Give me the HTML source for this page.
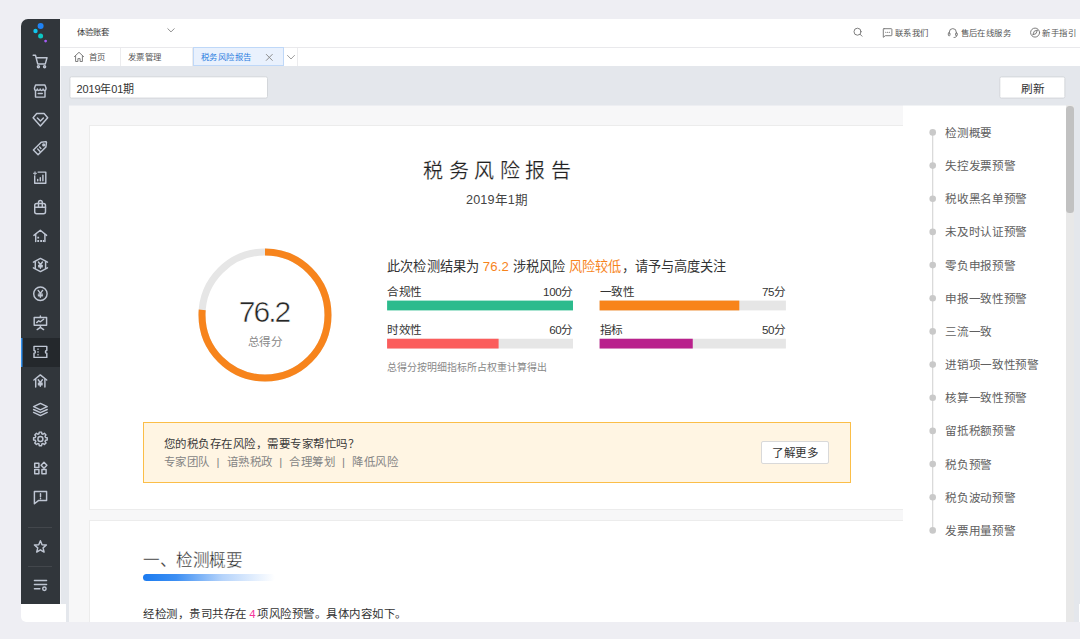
<!DOCTYPE html>
<html lang="zh-CN">
<head>
<meta charset="utf-8">
<title>税务风险报告</title>
<style>
*{box-sizing:border-box;margin:0;padding:0}
html,body{width:1080px;height:639px;overflow:hidden;background:#eeeef3}
body{font-family:"Liberation Sans",sans-serif;color:#333;position:relative;-webkit-font-smoothing:antialiased}
.abs{position:absolute}
#app{position:absolute;left:21px;top:19px;width:1059px;height:603px;background:#e4e7ec;border-radius:7px 0 0 5px;overflow:hidden}
#pg{position:absolute;left:-21px;top:-19px;width:1080px;height:639px}
#side{left:21px;top:19px;width:39px;height:585.3px;background:#31363b}
#sidebot{left:21px;top:604.3px;width:45.1px;height:17.7px;background:#fff}
#hdr{left:60px;top:19px;width:1020px;height:29px;background:#fff;border-bottom:1px solid #e9e9ec}
#tabs{left:60px;top:48px;width:1020px;height:18px;background:#fff}
.t8{font-size:8.4px;line-height:12px;letter-spacing:.42px;white-space:nowrap;color:#555}
.tab{top:48px;height:18px;border-right:1px solid #ececee}
#content{left:69.2px;top:106px;width:996.5px;height:517px;background:#f7f7f8}
.card{background:#fff;border:1px solid #ececec}
.ico{position:absolute;fill:none;stroke:#bfc6d3;stroke-width:1.45;stroke-linecap:round;stroke-linejoin:round}
.hi{position:absolute;fill:none;stroke:#777;stroke-width:.95;stroke-linecap:round;stroke-linejoin:round}
.lbl{font-size:11.6px;line-height:14px;letter-spacing:-.35px;color:#333;white-space:nowrap}
.nav{left:945.4px;font-size:11.6px;line-height:14px;letter-spacing:-.35px;color:#606060;white-space:nowrap}
.sp{margin:0 6.7px}
</style>
</head>
<body>
<div id="app"><div id="pg">

<!-- SIDEBAR -->
<div id="side" class="abs"></div>
<div id="sidebot" class="abs"></div>
<div class="abs" style="left:21px;top:337.600px;width:39px;height:29.200px;background:#24282c"></div>
<div class="abs" style="left:21px;top:337.600px;width:1px;height:29.200px;background:#3391ee"></div><div class="abs" style="left:22px;top:337.600px;width:1px;height:29.200px;background:#2a5c8d"></div>
<svg class="ico" style="left:21px;top:19px;width:39px;height:586px" viewBox="21 19 39 586">
<g transform="translate(32.4 53.7)"><path d="M0.8 1.6h2.3l2.2 8.6h7.6l1.7-6.2H4"/><circle cx="6" cy="13" r="1" /><circle cx="12.2" cy="13" r="1"/></g>
<g transform="translate(32.4 83.0)"><path d="M3.200 1.900h9.300l1.100 3v1.100c0 .8-.6 1.400-1.440 1.400s-1.440-.6-1.440-1.400c0 .8-.6 1.400-1.440 1.400S7.850 6.800 7.850 6c0 .8-.6 1.400-1.440 1.400S4.970 6.800 4.970 6c0 .8-.6 1.400-1.440 1.400S2.100 6.800 2.100 6V4.900z"/><path d="M3.100 7.400v6.700h9.500V7.400"/><path d="M5.800 10.500h4.100"/></g>
<g transform="translate(32.4 111.7)"><path d="M4.3 1.800h7.400L15.300 6 8 14.300 0.700 6z"/><path d="M5 6.200L8 9.200l3-3"/></g>
<g transform="translate(32.4 140.7)"><path d="M1 9.300L8.800 1.500l4.700-.6.600 .6-.600 4.700-7.800 7.800z" /><circle cx="11.300" cy="4.200" r="0.900"/><path d="M5.300 8.300l2.400 2.400M7.200 6.400l1.300 1.300"/></g>
<g transform="translate(32.4 169.6)"><path d="M5.700 2.500H13.400V13.600H2.300V6.300"/><path d="M5.300 11.200V9.900M7.900 11.200V8.200M10.500 11.200V5.600"/><path d="M2.600 2.100v3M1.100 3.600h3" stroke-width="1.100"/></g>
<g transform="translate(32.4 198.9)"><rect x="2.300" y="4.600" width="10.800" height="10.200" rx="2"/><path d="M6.100 8.300V3.500a1.900 1.900 0 0 1 3.800 0V8.300"/><path d="M2.300 8.300h10.800"/></g>
<g transform="translate(32.4 228.0)"><path d="M1.500 7.400L7.900 2.300l6.300 5.100"/><path d="M3.300 6.400v7.200M12.500 6.400v7.200"/><path d="M4.900 9.600h1.800M4.900 13h1.800M7.800 13h1.800M10.400 13h1.300" stroke-width="1.900" stroke-linecap="butt"/></g>
<g transform="translate(32.4 256.6)"><path d="M1 5.600L8.050 1.800l7.050 3.800M1 11.200L8.050 15l7.050-3.800M2.900 4.900v7M13.200 4.900v7"/><path d="M6.05 5.40L8.05 8.10L10.05 5.40 M8.05 8.10V11.60 M6.25 8.80h3.60 M6.25 10.20h3.60"/></g>
<g transform="translate(32.4 285.7)"><circle cx="8" cy="8" r="6.700"/><path d="M5.80 4.70L8.00 7.67L10.20 4.70 M8.00 7.67V11.52 M6.02 8.44h3.96 M6.02 9.98h3.96"/></g>
<g transform="translate(32.4 314.8)"><path d="M1.800 2.800h12.400v7.700H1.800zM8 1.200v1.600M8 10.500v2M4.800 14.800L8 12.500l3.200 2.300"/><path d="M4.300 7.800l2-1.800 1.700 1 3.200-2.500"/></g>
<g transform="translate(32.4 343.9)"><path d="M1.600 2.500h12.800v4.100a1.400 1.400 0 0 0 0 2.800v4.100H1.600v-4.100a1.400 1.400 0 0 0 0-2.800z"/><path d="M5.600 5v.6M5.600 7.700v.6M5.600 10.400v.6" stroke-width="1.250"/></g>
<g transform="translate(32.4 372.9)"><path d="M1.500 7.100L7.900 2l6.400 5.100"/><path d="M3.300 6.300v7.900M12.500 6.300v7.900"/><path d="M5.80 6.85L7.90 9.69L10.00 6.85 M7.90 9.69V13.36 M6.01 10.42h3.78 M6.01 11.89h3.78"/></g>
<g transform="translate(32.4 401.9)"><path d="M8 1.500l6.800 3.200L8 7.900 1.200 4.700z"/><path d="M1.200 7.600L8 10.800l6.800-3.200M1.200 10.500L8 13.700l6.800-3.200"/></g>
<g transform="translate(32.4 430.9)"><path d="M6.83 1.20 L9.17 1.20 L9.41 2.89 L10.61 3.39 L11.98 2.37 L13.63 4.02 L12.61 5.39 L13.11 6.59 L14.80 6.83 L14.80 9.17 L13.11 9.41 L12.61 10.61 L13.63 11.98 L11.98 13.63 L10.61 12.61 L9.41 13.11 L9.17 14.80 L6.83 14.80 L6.59 13.11 L5.39 12.61 L4.02 13.63 L2.37 11.98 L3.39 10.61 L2.89 9.41 L1.20 9.17 L1.20 6.83 L2.89 6.59 L3.39 5.39 L2.37 4.02 L4.02 2.37 L5.39 3.39 L6.59 2.89z" stroke-linejoin="round"/><circle cx="8" cy="8" r="2.500"/></g>
<g transform="translate(32.4 460.3)"><rect x="2.300" y="2.900" width="4.200" height="4.200"/><rect x="2.300" y="9.300" width="4.200" height="4.200"/><rect x="9.500" y="9.300" width="4.200" height="4.200"/><path d="M11.600 2l2.900 3-2.900 3-2.900-3z"/></g>
<g transform="translate(32.4 489.3)"><path d="M2 2.300h12.200v9H6l-4 3.200z"/><path d="M8.100 4.500v3M8.100 9.200v0.300"/></g>
<g transform="translate(32.4 538.5)"><path d="M8.00 2.20 L9.65 6.23 L13.99 6.55 L10.66 9.37 L11.70 13.60 L8.00 11.30 L4.30 13.60 L5.34 9.37 L2.01 6.55 L6.35 6.23z"/></g>
<g transform="translate(32.4 577.2)"><path d="M2 3.300h12.200M2 7.300h12.200M2 11.500h5.500" stroke-width="1.400"/><circle cx="12" cy="11.500" r="1.700"/></g>
</svg>
<div class="abs" style="left:28px;top:526.800px;width:24px;height:1px;background:#43474c"></div>
<div class="abs" style="left:28px;top:565.800px;width:24px;height:1px;background:#43474c"></div>
<svg class="abs" style="left:21px;top:19px;width:39px;height:28px" viewBox="0 0 39 28"><circle cx="19.600" cy="7.100" r="3" fill="#1f83f5"/><circle cx="14.500" cy="12" r="2.200" fill="#12c4ec"/><circle cx="19.600" cy="17.100" r="2.500" fill="#0cc7c3"/><circle cx="24.600" cy="22.100" r="1.400" fill="#a55cf5"/></svg>


<div class="abs" style="left:60px;top:66px;width:1px;height:538.3px;background:#f4f5f8"></div>
<!-- HEADER -->
<div id="hdr" class="abs"></div>
<div class="abs t8" style="left:76.5px;top:25.7px;color:#333;letter-spacing:.15px">体验账套</div>

<div class="abs t8" style="left:895px;top:26.800px">联系我们</div>
<div class="abs t8" style="left:960.500px;top:26.800px">售后在线服务</div>
<div class="abs t8" style="left:1042.300px;top:26.800px">新手指引</div>


<!-- TABS -->
<div id="tabs" class="abs"></div>
<div class="abs tab" style="left:60px;width:61px"></div>
<div class="abs tab" style="left:121px;width:72.2px"></div>
<div class="abs tab" style="left:193.2px;width:90.4px;top:47px;height:19px;background:#e9f1fd;border:1px solid #bfd8f8"></div>
<div class="abs tab" style="left:283.5px;width:14.8px"></div>
<div class="abs t8" style="left:89px;top:50.8px">首页</div>
<div class="abs t8" style="left:127.8px;top:50.8px">发票管理</div>
<div class="abs t8" style="left:201px;top:50.8px;color:#2b7de0">税务风险报告</div>



<svg class="hi" style="left:60px;top:19px;width:1020px;height:47px" viewBox="60 19 1020 47">
<g transform="translate(167 27.5)"><path d="M0.8 1.2L4 4.4L7.2 1.2" stroke="#888"/></g>
<g transform="translate(852 26)"><circle cx="5.500" cy="5.700" r="3.500"/><path d="M8.100 8.300l1.900 1.900"/></g>
<g transform="translate(882 27)"><path d="M2 1.700h7.200a.7.700 0 0 1 .7.700v5.600a.7.700 0 0 1-.7.700H3.300L1.300 10.300V2.400a.7.700 0 0 1 .7-.7z"/><path d="M3.700 5.300h.2M5.500 5.300h.2M7.300 5.300h.2" stroke-width="1.100"/></g>
<g transform="translate(947 27)"><path d="M2.300 6.200V5.300a3.500 3.700 0 0 1 7 0v.9"/><rect x="1.300" y="5.800" width="1.700" height="3" rx=".8"/><rect x="8.600" y="5.800" width="1.700" height="3" rx=".8"/><path d="M9.600 8.800c0 1.200-1 1.700-2.600 1.700"/></g>
<g transform="translate(1029 26.600)"><circle cx="6.100" cy="6" r="4.500"/><path d="M8.300 3.800L7 7l-3.200 1.200L5.100 5z"/></g>
<g transform="translate(73 51)"><path d="M1.400 5.600L6 1.300l4.600 4.300"/><path d="M2.600 5v5.500h2.300V7.600h2.200v2.900h2.300V5"/></g>
<g transform="translate(265.300 53.400)"><path d="M1 1l6 6M7 1L1 7" stroke="#888"/></g>
<g transform="translate(286.500 54)"><path d="M1 1.400l3.500 3.600L8 1.400" stroke="#999"/></g>
</svg>
<!-- TOOLBAR -->
<svg class="abs" style="left:60px;top:70px;width:1020px;height:34px" viewBox="60 70 1020 34"><rect x="69.9" y="76.8" width="197.6" height="21.3" rx="1.6" fill="#fff" stroke="#d3d6da"/><rect x="999.8" y="76.9" width="65.1" height="21.2" rx="1.6" fill="#fff" stroke="#d3d6da"/></svg>
<div class="abs" style="left:76.6px;top:81.7px;font-size:11px;line-height:14px;letter-spacing:-.15px;color:#333;white-space:nowrap">2019年01期</div>
<div class="abs" style="left:999.5px;top:81.8px;width:66px;text-align:center;font-size:11.7px;line-height:14px;letter-spacing:-.2px;padding-left:.2px;color:#333">刷新</div>

<!-- CONTENT -->
<div class="abs" style="left:69px;top:105px;width:997px;height:1px;background:#edeef2"></div>
<div id="content" class="abs"></div>
<div class="abs card" style="left:89px;top:125px;width:830px;height:385px"></div>
<div class="abs card" style="left:89px;top:520px;width:830px;height:120px"></div>


<!-- REPORT CARD 1 -->
<div class="abs" style="left:89.6px;top:158.5px;width:815px;text-align:center;font-size:20px;line-height:24px;letter-spacing:5.6px;padding-left:5.6px;color:#222;-webkit-text-stroke:.2px #fff;white-space:nowrap">税务风险报告</div>
<div class="abs" style="left:89.6px;top:191.8px;width:815px;text-align:center;font-size:12.6px;line-height:16px;letter-spacing:.15px;color:#444;white-space:nowrap">2019年1期</div>

<svg class="abs" style="left:195px;top:245px;width:140px;height:140px" viewBox="0 0 140 140">
  <circle cx="70" cy="70" r="63" fill="none" stroke="#e6e6e6" stroke-width="7"/>
  <circle cx="70" cy="70" r="63" fill="none" stroke="#f7841c" stroke-width="7" stroke-dasharray="301.63 395.84" transform="rotate(-90 70 70)"/>
</svg>
<div class="abs" style="left:195px;top:294px;width:140px;text-align:center;font-size:30px;line-height:36px;letter-spacing:-2px;padding-right:2px;color:#262626;-webkit-text-stroke:.55px #fff">76.2</div>
<div class="abs" style="left:195px;top:334.7px;width:140px;text-align:center;font-size:11.6px;line-height:14px;letter-spacing:-.35px;color:#888">总得分</div>

<div class="abs" style="left:387.2px;top:258.8px;font-size:13.2px;line-height:16px;letter-spacing:.12px;color:#333;white-space:nowrap">此次检测结果为 <span style="color:#f7841c">76.2</span> 涉税风险 <span style="color:#f7841c">风险较低</span>，请予与高度关注</div>

<div class="abs lbl" style="left:387.2px;top:284.6px">合规性</div>
<div class="abs lbl" style="left:387.2px;top:284.6px;width:185.8px;text-align:right">100分</div>

<div class="abs lbl" style="left:599.6px;top:284.6px">一致性</div>
<div class="abs lbl" style="left:599.6px;top:284.6px;width:186.2px;text-align:right">75分</div>

<div class="abs lbl" style="left:387.2px;top:322.8px">时效性</div>
<div class="abs lbl" style="left:387.2px;top:322.8px;width:185.8px;text-align:right">60分</div>

<div class="abs lbl" style="left:599.6px;top:322.8px">指标</div>
<div class="abs lbl" style="left:599.6px;top:322.8px;width:186.2px;text-align:right">50分</div>

<div class="abs" style="left:387.2px;top:361.8px;font-size:9.95px;line-height:12px;color:#888;white-space:nowrap">总得分按明细指标所占权重计算得出</div>

<svg class="abs" style="left:380px;top:295px;width:420px;height:60px" viewBox="380 295 420 60" shape-rendering="geometricPrecision">
<rect x="387.1" y="300.6" width="185.9" height="9.8" fill="#2cbb8d"/>
<rect x="599.6" y="300.6" width="186.3" height="9.8" fill="#e6e6e6"/><rect x="599.6" y="300.6" width="139.7" height="9.8" fill="#f8841a"/>
<rect x="387.1" y="338.75" width="185.9" height="9.75" fill="#e6e6e6"/><rect x="387.1" y="338.75" width="111.5" height="9.75" fill="#fb5d5c"/>
<rect x="599.6" y="338.75" width="186.3" height="9.75" fill="#e6e6e6"/><rect x="599.6" y="338.75" width="93.15" height="9.75" fill="#b9218c"/>
</svg>
<!-- BANNER -->
<div class="abs" style="left:143.1px;top:422.2px;width:708.2px;height:60.6px;background:#fff5e3;border:1px solid #fbbe48"></div>
<div class="abs" style="left:164px;top:437.3px;font-size:11.45px;line-height:14px;letter-spacing:.47px;color:#3a3a3a;white-space:nowrap">您的税负存在风险，需要专家帮忙吗？</div>
<div class="abs" style="left:164px;top:454.5px;font-size:11.45px;line-height:14px;letter-spacing:.47px;color:#848484;white-space:nowrap">专家团队<span class="sp">|</span>谙熟税政<span class="sp">|</span>合理筹划<span class="sp">|</span>降低风险</div>
<div class="abs" style="left:761.1px;top:441.1px;width:67.8px;height:22.7px;background:#fff;border:1px solid #d9d9d9;border-radius:2px"></div>
<div class="abs" style="left:761.1px;top:445.9px;width:67.8px;text-align:center;font-size:11.55px;line-height:14px;letter-spacing:-.45px;padding-left:.45px;color:#333;white-space:nowrap">了解更多</div>

<!-- REPORT CARD 2 -->
<div class="abs" style="left:143px;top:551.4px;font-size:16.6px;line-height:20px;letter-spacing:-.45px;color:#222;-webkit-text-stroke:.3px #fff;white-space:nowrap">一、检测概要</div>
<div class="abs" style="left:143px;top:574px;width:132px;height:7px;border-radius:3.5px;background:linear-gradient(90deg,#1b7bf0 0%,#3d8ff3 25%,rgba(120,175,247,.55) 60%,rgba(255,255,255,0) 100%)"></div>
<div class="abs" style="left:143px;top:606.9px;font-size:11.45px;line-height:14px;letter-spacing:.5px;color:#333;white-space:nowrap">经检测，贵司共存在<span style="color:#f5339b;margin:0 1.7px 0 2.8px;letter-spacing:0">4</span>项风险预警。具体内容如下。</div>



<!-- RIGHT PANEL -->
<div class="abs" style="left:903px;top:105px;width:163px;height:1px;background:#f1f3f5"></div>
<div class="abs" style="left:902.8px;top:106px;width:163px;height:517px;background:#fff"></div>
<svg class="abs" style="left:925px;top:120px;width:16px;height:420px" viewBox="925 120 16 420"><path d="M932.7 132.4V530.4" stroke="#d4d4d4" stroke-width="1.1" fill="none"/><circle cx="932.7" cy="132.4" r="3.3" fill="#c9c9c9"/><circle cx="932.7" cy="165.6" r="3.3" fill="#c9c9c9"/><circle cx="932.7" cy="198.7" r="3.3" fill="#c9c9c9"/><circle cx="932.7" cy="231.9" r="3.3" fill="#c9c9c9"/><circle cx="932.7" cy="265.1" r="3.3" fill="#c9c9c9"/><circle cx="932.7" cy="298.2" r="3.3" fill="#c9c9c9"/><circle cx="932.7" cy="331.4" r="3.3" fill="#c9c9c9"/><circle cx="932.7" cy="364.6" r="3.3" fill="#c9c9c9"/><circle cx="932.7" cy="397.8" r="3.3" fill="#c9c9c9"/><circle cx="932.7" cy="430.9" r="3.3" fill="#c9c9c9"/><circle cx="932.7" cy="464.1" r="3.3" fill="#c9c9c9"/><circle cx="932.7" cy="497.3" r="3.3" fill="#c9c9c9"/><circle cx="932.7" cy="530.4" r="3.3" fill="#c9c9c9"/></svg>
<div class="abs nav" style="top:125.9px">检测概要</div>
<div class="abs nav" style="top:159.1px">失控发票预警</div>
<div class="abs nav" style="top:192.2px">税收黑名单预警</div>
<div class="abs nav" style="top:225.4px">未及时认证预警</div>
<div class="abs nav" style="top:258.6px">零负申报预警</div>
<div class="abs nav" style="top:291.8px">申报一致性预警</div>
<div class="abs nav" style="top:324.9px">三流一致</div>
<div class="abs nav" style="top:358.1px">进销项一致性预警</div>
<div class="abs nav" style="top:391.3px">核算一致性预警</div>
<div class="abs nav" style="top:424.4px">留抵税额预警</div>
<div class="abs nav" style="top:457.6px">税负预警</div>
<div class="abs nav" style="top:490.8px">税负波动预警</div>
<div class="abs nav" style="top:523.9px">发票用量预警</div>
<div class="abs" style="left:1065.7px;top:105px;width:8px;height:517px;background:#e8e8e8"></div>
<div class="abs" style="left:1065.7px;top:105.5px;width:8px;height:107.5px;background:#c1c1c1;border-radius:3.5px"></div>
<div class="abs" style="left:1079px;top:604.4px;width:1px;height:17.6px;background:#fff"></div>


</div></div>
</body>
</html>
